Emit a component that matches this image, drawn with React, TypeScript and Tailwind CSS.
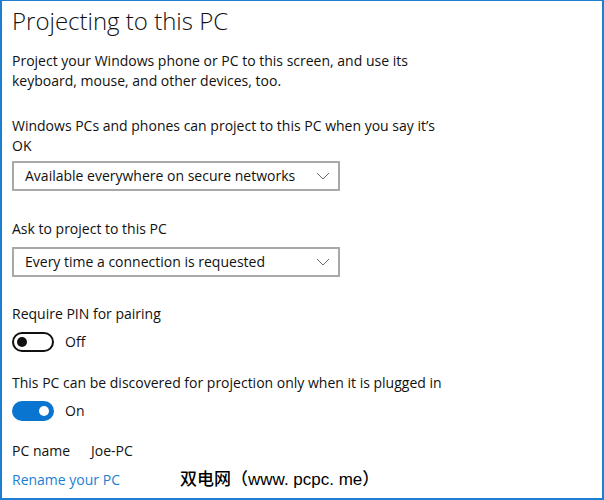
import React from 'react';

function Dropdown({ value }: { value: string }) {
    return (
        <div className="w-[328px] h-[30px] border-2 border-[#a8a8a8] flex items-center justify-between pl-[11px] pr-[8px]">
            <span className="text-[14px] leading-[20px] text-[#111]">{value}</span>
            <svg width="14" height="8" viewBox="0 0 14 8" fill="none">
                <path d="M1 1l6 6 6-6" stroke="#6b6b6b" strokeWidth="1" />
            </svg>
        </div>
    );
}

function Toggle({ on }: { on: boolean }) {
    return (
        <div className="flex items-center gap-[11px]">
            {on ? (
                <div className="w-[42px] h-[20px] rounded-full bg-[#0a74d1] flex items-center justify-end pr-[5px]">
                    <div className="w-[10px] h-[10px] rounded-full bg-white" />
                </div>
            ) : (
                <div className="w-[42px] h-[20px] rounded-full border-2 border-[#111] flex items-center pl-[3px]">
                    <div className="w-[10px] h-[10px] rounded-full bg-[#111]" />
                </div>
            )}
            <span className="text-[14px] leading-[20px] text-[#111]">{on ? 'On' : 'Off'}</span>
        </div>
    );
}

export default function App() {
    return (
        <div
            className="w-[604px] h-[500px] bg-white border-t border-l-2 border-r-2 border-b-2 border-[#1e7fd0] overflow-hidden"
            style={{ fontFamily: '"Open Sans", "Noto Sans", sans-serif' }}
        >
            <div className="flex flex-col pl-[10px] pt-[4px] text-[#111]">
                <h1 className="text-[24px] leading-[32px] font-light">Projecting to this PC</h1>

                <p className="mt-[14px] text-[14px] leading-[20px] w-[420px]">
                    Project your Windows phone or PC to this screen, and use its keyboard, mouse, and other devices, too.
                </p>

                <p className="mt-[25px] text-[14px] leading-[20px] w-[440px]">
                    Windows PCs and phones can project to this PC when you say it’s OK
                </p>
                <div className="mt-[5px]">
                    <Dropdown value="Available everywhere on secure networks" />
                </div>

                <p className="mt-[28px] text-[14px] leading-[20px]">Ask to project to this PC</p>
                <div className="mt-[8px]">
                    <Dropdown value="Every time a connection is requested" />
                </div>

                <p className="mt-[27px] text-[14px] leading-[20px]">Require PIN for pairing</p>
                <div className="mt-[8px]">
                    <Toggle on={false} />
                </div>

                <p className="mt-[21px] text-[14px] leading-[20px]">
                    This PC can be discovered for projection only when it is plugged in
                </p>
                <div className="mt-[8px]">
                    <Toggle on={true} />
                </div>

                <div className="mt-[20px] flex text-[14px] leading-[20px]">
                    <span className="w-[79px]">PC name</span>
                    <span>Joe-PC</span>
                </div>

                <div className="mt-[9px] flex items-center">
                    <span className="text-[14px] leading-[20px] text-[#1a7fd4] w-[168px]">Rename your PC</span>
                    <span
                        className="text-[17px] leading-[20px] text-black font-medium"
                        style={{ fontFamily: '"Liberation Sans", "Noto Sans CJK SC", sans-serif' }}
                    >
                        双电网（www. pcpc. me）
                    </span>
                </div>
            </div>
        </div>
    );
}
